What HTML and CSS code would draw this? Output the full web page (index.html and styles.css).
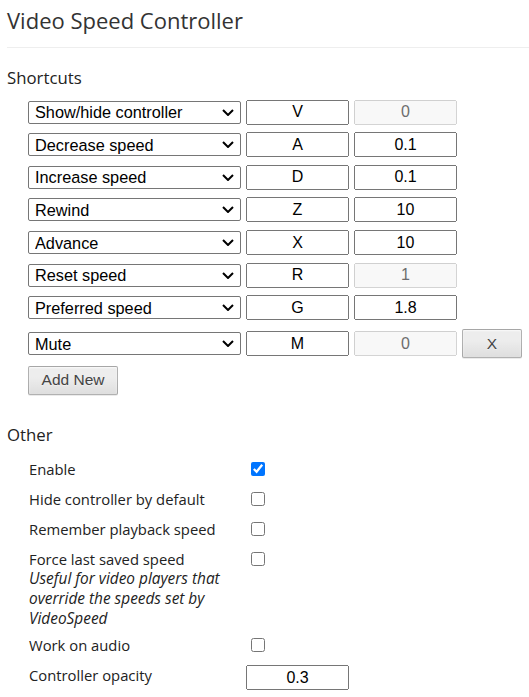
FILE: index.html
```html
<!DOCTYPE html>
<html>
<head>
<meta charset="utf-8">
<title>Video Speed Controller</title>
<link rel="stylesheet" href="styles.css">
</head>
<body>
<h1 class="title">Video Speed Controller</h1>

<section class="section">
  <h3 class="section-title">Shortcuts</h3>
  <div class="shortcuts">
    <div class="row">
      <span class="select-wrap"><select class="action"><option>Show/hide controller</option></select><svg class="chev" viewBox="0 0 12 7" width="12" height="7"><path d="M1 1 L6 6 L11 1" fill="none" stroke="#000" stroke-width="2"/></svg></span>
      <input class="field" type="text" value="V">
      <input class="field" type="text" value="0" disabled>
    </div>
    <div class="row">
      <span class="select-wrap"><select class="action"><option>Decrease speed</option></select><svg class="chev" viewBox="0 0 12 7" width="12" height="7"><path d="M1 1 L6 6 L11 1" fill="none" stroke="#000" stroke-width="2"/></svg></span>
      <input class="field" type="text" value="A">
      <input class="field" type="text" value="0.1">
    </div>
    <div class="row">
      <span class="select-wrap"><select class="action"><option>Increase speed</option></select><svg class="chev" viewBox="0 0 12 7" width="12" height="7"><path d="M1 1 L6 6 L11 1" fill="none" stroke="#000" stroke-width="2"/></svg></span>
      <input class="field" type="text" value="D">
      <input class="field" type="text" value="0.1">
    </div>
    <div class="row">
      <span class="select-wrap"><select class="action"><option>Rewind</option></select><svg class="chev" viewBox="0 0 12 7" width="12" height="7"><path d="M1 1 L6 6 L11 1" fill="none" stroke="#000" stroke-width="2"/></svg></span>
      <input class="field" type="text" value="Z">
      <input class="field" type="text" value="10">
    </div>
    <div class="row">
      <span class="select-wrap"><select class="action"><option>Advance</option></select><svg class="chev" viewBox="0 0 12 7" width="12" height="7"><path d="M1 1 L6 6 L11 1" fill="none" stroke="#000" stroke-width="2"/></svg></span>
      <input class="field" type="text" value="X">
      <input class="field" type="text" value="10">
    </div>
    <div class="row">
      <span class="select-wrap"><select class="action"><option>Reset speed</option></select><svg class="chev" viewBox="0 0 12 7" width="12" height="7"><path d="M1 1 L6 6 L11 1" fill="none" stroke="#000" stroke-width="2"/></svg></span>
      <input class="field" type="text" value="R">
      <input class="field" type="text" value="1" disabled>
    </div>
    <div class="row">
      <span class="select-wrap"><select class="action"><option>Preferred speed</option></select><svg class="chev" viewBox="0 0 12 7" width="12" height="7"><path d="M1 1 L6 6 L11 1" fill="none" stroke="#000" stroke-width="2"/></svg></span>
      <input class="field" type="text" value="G">
      <input class="field" type="text" value="1.8">
    </div>
    <div class="row row-custom">
      <span class="select-wrap"><select class="action"><option>Mute</option></select><svg class="chev" viewBox="0 0 12 7" width="12" height="7"><path d="M1 1 L6 6 L11 1" fill="none" stroke="#000" stroke-width="2"/></svg></span>
      <input class="field" type="text" value="M">
      <input class="field" type="text" value="0" disabled>
      <button class="btn btn-remove" type="button">X</button>
    </div>
    <button class="btn btn-add" type="button">Add New</button>
  </div>
</section>

<section class="section">
  <h3 class="section-title section-title-other">Other</h3>
  <div class="options">
    <div class="opt">
      <label class="opt-label">Enable</label>
      <input class="check" type="checkbox" checked>
    </div>
    <div class="opt">
      <label class="opt-label">Hide controller by default</label>
      <input class="check" type="checkbox">
    </div>
    <div class="opt">
      <label class="opt-label">Remember playback speed</label>
      <input class="check" type="checkbox">
    </div>
    <div class="opt opt-force">
      <label class="opt-label">Force last saved speed<em class="desc">Useful for video players that override the speeds set by VideoSpeed</em></label>
      <input class="check" type="checkbox">
    </div>
    <div class="opt">
      <label class="opt-label">Work on audio</label>
      <input class="check" type="checkbox">
    </div>
    <div class="opt opt-input">
      <label class="opt-label">Controller opacity</label>
      <input class="field" type="text" value="0.3">
    </div>
  </div>
</section>
</body>
</html>
```

FILE: styles.css
```css
html, body {
  margin: 0;
  padding: 0;
  background: #ffffff;
}

body {
  padding-left: 7px;
  font-family: "Open Sans", "Noto Sans", sans-serif;
  color: #222;
  overflow: hidden;
}

.title {
  margin: 0;
  font-size: 22px;
  font-weight: normal;
  line-height: 40px;
  height: 40px;
  padding-bottom: 7px;
  border-bottom: 1px solid #eeeeee;
  color: #333;
}

.section-title {
  margin: 18px 0 0;
  font-size: 16.8px;
  font-weight: normal;
  line-height: 24px;
  color: #222;
}

.shortcuts {
  padding-left: 21px;
  padding-top: 5.7px;
}

.row {
  display: flex;
  align-items: center;
  gap: 5px;
  height: 32.67px;
}

.row-custom {
  height: 39.3px;
}

.select-wrap {
  position: relative;
  display: block;
  width: 213px;
  height: 23px;
}

.action {
  -webkit-appearance: none;
  appearance: none;
  width: 213px;
  height: 23px;
  margin: 0;
  padding: 0 20px 0 6px;
  border: 1px solid #767676;
  border-radius: 2px;
  background: #fff;
  font-family: "Liberation Sans", Arial, sans-serif;
  font-size: 16.3px;
  color: #000;
  box-sizing: border-box;
}

.chev {
  position: absolute;
  right: 7px;
  top: 8px;
  pointer-events: none;
}

.field {
  width: 103px;
  height: 25px;
  margin: 0;
  padding: 0 2px;
  box-sizing: border-box;
  text-align: center;
  font-family: "Liberation Sans", Arial, sans-serif;
  font-size: 16px;
  color: #000;
}

.field:disabled {
  color: #6d6d6d;
}

.btn {
  margin: 0;
  padding: 0 10px;
  height: 29px;
  background-image: linear-gradient(#ededed, #ededed 38%, #dedede);
  border: 1px solid rgba(0, 0, 0, 0.25);
  border-radius: 2px;
  box-shadow: 0 1px 0 rgba(0, 0, 0, 0.08), inset 0 1px 2px rgba(255, 255, 255, 0.75);
  color: #444;
  text-shadow: 0 1px 0 #f0f0f0;
  font-family: "Liberation Sans", Arial, sans-serif;
  font-size: 15.5px;
  box-sizing: border-box;
}

.btn-remove {
  width: 60px;
}

.btn-add {
  width: 90px;
  margin-top: 2.3px;
  display: block;
}

.section-title-other {
  margin-top: 28.5px;
}

.options {
  padding-left: 22px;
  padding-top: 11.5px;
}

.opt {
  display: flex;
  align-items: flex-start;
  margin-bottom: 10px;
}

.opt-force {
  margin-bottom: 6.4px;
}

.opt-label {
  width: 217px;
  flex: none;
  font-size: 14.8px;
  line-height: 20px;
  color: #222;
}

.desc {
  display: block;
  font-style: italic;
  font-size: 15.4px;
  line-height: 20px;
}

.check {
  width: 14px;
  height: 14px;
  margin: 3px 0 0 5px;
  accent-color: #0075ff;
}

.opt-input .field {
  margin-top: 0;
}
```
